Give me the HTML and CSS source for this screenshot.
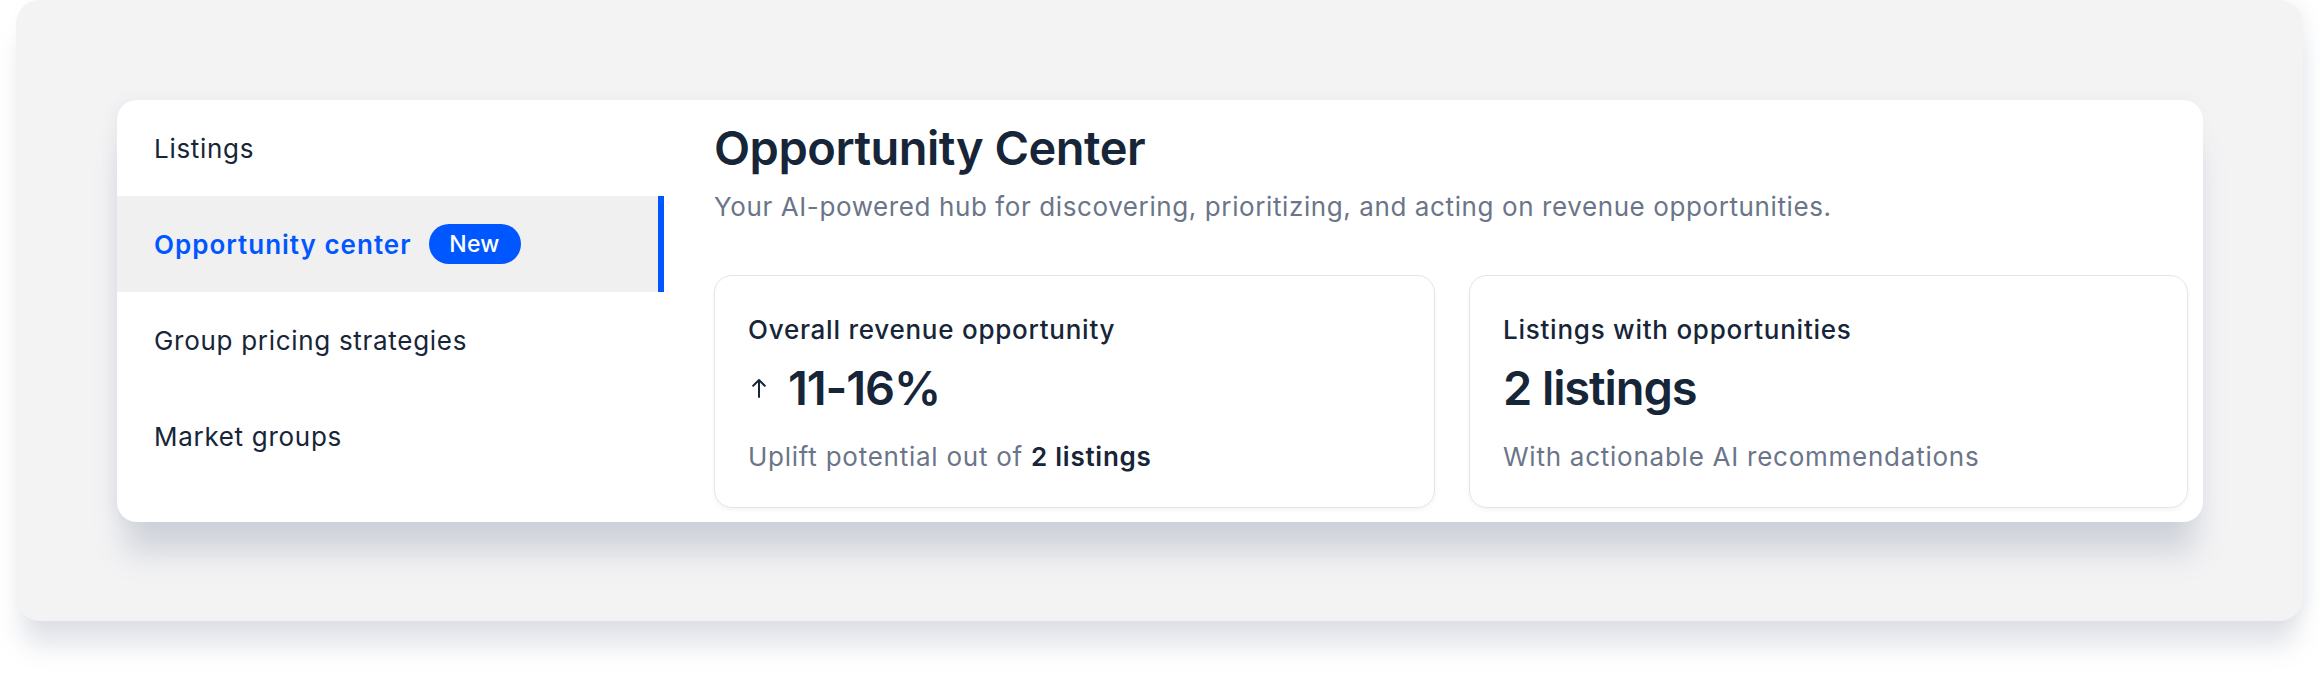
FILE: index.html
```html
<!DOCTYPE html>
<html lang="en">
<head>
<meta charset="utf-8">
<title>Opportunity Center</title>
<link rel="stylesheet" href="styles.css">
</head>
<body>
<div class="frame">
  <div class="panel">
    <nav class="sidebar">
      <div class="nav-item">Listings</div>
      <div class="nav-item active">Opportunity center <span class="badge">New</span></div>
      <div class="nav-item">Group pricing strategies</div>
      <div class="nav-item">Market groups</div>
    </nav>
    <main class="main">
      <h1 class="title">Opportunity Center</h1>
      <p class="subtitle">Your AI-powered hub for discovering, prioritizing, and acting on revenue opportunities.</p>
      <div class="stats">
        <div class="stat">
          <div class="stat-label">Overall revenue opportunity</div>
          <div class="stat-value">
            <svg class="arrow" width="14" height="20" viewBox="0 0 14 20" aria-hidden="true"><path d="M7 19V2M1.2 7.8L7 2l5.8 5.8" fill="none" stroke="#172538" stroke-width="2" stroke-linecap="round" stroke-linejoin="round"/></svg>
            <span>11-16%</span>
          </div>
          <div class="stat-note">Uplift potential out of <strong>2 listings</strong></div>
        </div>
        <div class="stat">
          <div class="stat-label">Listings with opportunities</div>
          <div class="stat-value"><span>2 listings</span></div>
          <div class="stat-note">With actionable AI recommendations</div>
        </div>
      </div>
    </main>
  </div>
</div>
</body>
</html>
```
FILE: styles.css
```css
* { box-sizing: border-box; }
html, body { margin: 0; padding: 0; background: #ffffff; }
body {
  font-family: "Inter", "Lato", "Liberation Sans", sans-serif;
  color: #172538;
  width: 2320px;
  height: 681px;
  overflow: hidden;
}
.frame {
  margin-left: 16px;
  width: 2287px;
  height: 621px;
  background: #f3f3f4;
  border-radius: 24px;
  padding: 100px 100px 0 101px;
  box-shadow: 0 30px 26px -6px rgba(120, 128, 155, 0.22), 6px 0 14px rgba(120, 128, 155, 0.08);
}
.panel {
  display: flex;
  background: #ffffff;
  border-radius: 20px;
  height: 422px;
  overflow: hidden;
  box-shadow: 0 38px 30px -8px rgba(120, 128, 155, 0.28), -4px 0 14px rgba(120, 128, 155, 0.07);
}
.sidebar {
  width: 547px;
  flex: none;
  display: flex;
  flex-direction: column;
}
.nav-item {
  height: 96px;
  display: flex;
  align-items: center;
  padding-left: 37px;
  font-size: 26px;
  letter-spacing: 0.7px;
  color: #172538;
}
.nav-item.active {
  background: #f0f0f0;
  border-right: 6px solid #0057ff;
  color: #0057ff;
  font-weight: 600;
  letter-spacing: 1px;
}
.badge {
  display: inline-flex;
  align-items: center;
  justify-content: center;
  height: 40px;
  width: 92px;
  margin-left: 17px;
  border-radius: 20px;
  background: #0057ff;
  color: #ffffff;
  font-size: 23px;
  font-weight: 500;
  letter-spacing: 0.3px;
}
.main {
  flex: 1;
  padding: 19px 15px 13px 50px;
  display: flex;
  flex-direction: column;
}
.title {
  margin: 0;
  font-size: 47px;
  line-height: 58px;
  font-weight: 600;
  letter-spacing: -0.5px;
  color: #172538;
}
.subtitle {
  margin: 14px 0 0;
  font-size: 26px;
  line-height: 32px;
  letter-spacing: 0.6px;
  color: #6b7589;
}
.stats {
  margin-top: 52px;
  display: grid;
  grid-template-columns: 721px 719px;
  gap: 34px;
}
.stat {
  height: 233px;
  border: 1.5px solid #e4e5ea;
  border-radius: 18px;
  padding: 38px 33px 0;
  box-shadow: 0 2px 4px rgba(20, 30, 60, 0.05);
  background: #ffffff;
}
.stat-label {
  font-size: 26px;
  line-height: 32px;
  font-weight: 500;
  letter-spacing: 0.75px;
  color: #172538;
}
.stat-value {
  margin-top: 13px;
  height: 58px;
  display: flex;
  align-items: center;
  gap: 22px;
  font-size: 47px;
  line-height: 58px;
  font-weight: 600;
  letter-spacing: -1.1px;
}
.arrow { margin-left: 4px; flex: none; }
.stat-note {
  margin-top: 24px;
  font-size: 26px;
  line-height: 32px;
  letter-spacing: 0.75px;
  color: #6b7589;
}
.stat-note strong { color: #172538; font-weight: 600; }
```
